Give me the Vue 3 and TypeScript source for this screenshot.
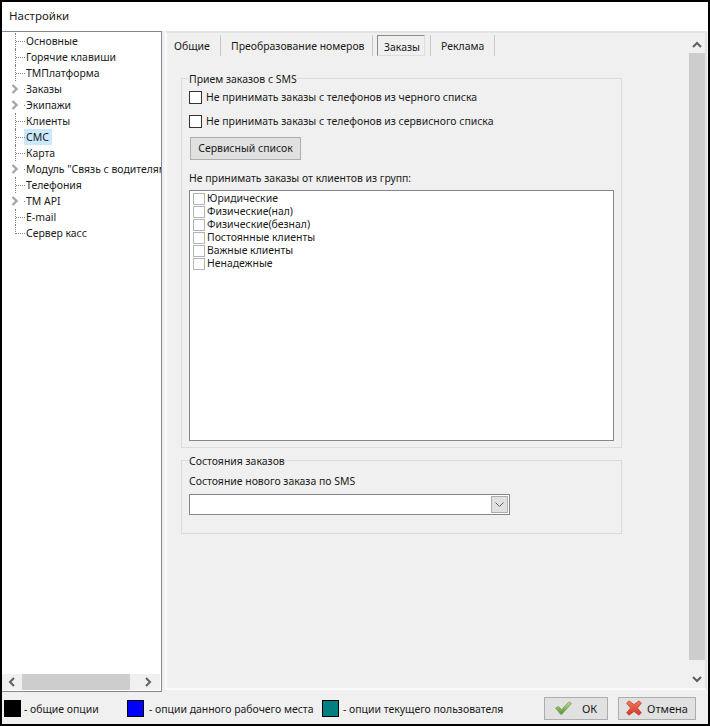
<script setup lang="ts">
const tree = [
  { t: 'Основные' }, { t: 'Горячие клавиши' }, { t: 'ТМПлатформа' },
  { t: 'Заказы', e: true }, { t: 'Экипажи', e: true }, { t: 'Клиенты' },
  { t: 'СМС', s: true }, { t: 'Карта' }, { t: 'Модуль "Связь с водителями"', e: true },
  { t: 'Телефония' }, { t: 'TM API', e: true }, { t: 'E-mail' }, { t: 'Сервер касс', last: true },
]
const tabs = ['Общие', 'Преобразование номеров', 'Заказы', 'Реклама']
const groups = ['Юридические', 'Физические(нал)', 'Физические(безнал)', 'Постоянные клиенты', 'Важные клиенты', 'Ненадежные']
const legend = [
  { c: '#000000', t: '- общие опции', w: 123 },
  { c: '#0000ff', t: '- опции данного рабочего места', w: 195 },
  { c: '#008080', t: '- опции текущего пользователя', w: 200 },
]
</script>

<template>
  <div class="window">
    <div class="title">Настройки</div>
    <div class="main">
      <aside class="tree">
        <div class="tree-list">
          <div v-for="n in tree" :key="n.t" class="node" :class="{ last: n.last }">
            <span class="guide" :class="{ exp: n.e }">
              <svg v-if="n.e" class="expander" width="8" height="10" viewBox="0 0 8 10"><path d="M1.5 1 L5.5 5 L1.5 9" fill="none" stroke="#a6a6a6" stroke-width="2.4" /></svg>
            </span>
            <span class="node-text" :class="{ sel: n.s }">{{ n.t }}</span>
          </div>
        </div>
        <div class="hscroll">
          <svg class="arr" width="16" height="16" viewBox="0 0 16 16"><path d="M10 4 L6 8 L10 12" fill="none" stroke="#606060" stroke-width="2" /></svg>
          <div class="hthumb"></div>
          <svg class="arr right" width="16" height="16" viewBox="0 0 16 16"><path d="M6 4 L10 8 L6 12" fill="none" stroke="#606060" stroke-width="2" /></svg>
        </div>
      </aside>
      <section class="pane">
        <div class="pane-body">
          <div class="tabs">
            <div v-for="(t, i) in tabs" :key="t" class="tab" :class="'tab' + i">
              <span :class="{ active: i === 2 }">{{ t }}</span>
            </div>
          </div>
          <fieldset class="group g1">
            <legend>Прием заказов с SMS</legend>
            <label class="chk c1"><i class="box"></i>Не принимать заказы с телефонов из черного списка</label>
            <label class="chk c2"><i class="box"></i>Не принимать заказы с телефонов из сервисного списка</label>
            <button class="btn svc">Сервисный список</button>
            <div class="cap">Не принимать заказы от клиентов из групп:</div>
            <div class="list">
              <div v-for="g in groups" :key="g" class="li"><i class="minibox"></i>{{ g }}</div>
            </div>
          </fieldset>
          <fieldset class="group g2">
            <legend>Состояния заказов</legend>
            <div class="cap2">Состояние нового заказа по SMS</div>
            <div class="combo">
              <div class="drop">
                <svg width="9" height="6" viewBox="0 0 9 6"><path d="M0.5 0.5 L4.5 4.5 L8.5 0.5" fill="none" stroke="#606060" stroke-width="1" /></svg>
              </div>
            </div>
          </fieldset>
        </div>
        <div class="vscroll">
          <svg width="16" height="17" viewBox="0 0 16 17"><path d="M4 11 L8 7 L12 11" fill="none" stroke="#606060" stroke-width="2" /></svg>
          <div class="vthumb"></div>
          <svg class="vdown" width="16" height="17" viewBox="0 0 16 17"><path d="M4 7 L8 11 L12 7" fill="none" stroke="#606060" stroke-width="2" /></svg>
        </div>
      </section>
    </div>
    <footer class="footer">
      <div v-for="l in legend" :key="l.t" class="leg" :style="{ width: l.w + 'px' }">
        <i class="swatch" :style="{ background: l.c }"></i><span>{{ l.t }}</span>
      </div>
      <div class="actions">
        <button class="btn ok">
          <svg width="17" height="14" viewBox="0 0 17 14">
            <defs><linearGradient id="gc" x1="0" y1="0" x2="0" y2="1"><stop offset="0" stop-color="#b5d98c" /><stop offset="1" stop-color="#5f9338" /></linearGradient></defs>
            <path d="M0.5 7 L3.5 5.5 L6.5 8.5 L14 0.8 L16.5 2.5 L7 13.2 L5.5 13.2 Z" fill="url(#gc)" stroke="#7ea75a" stroke-width="0.8" />
          </svg>
          <span>ОК</span>
        </button>
        <button class="btn cancel">
          <svg width="16" height="16" viewBox="0 0 16 16">
            <defs><linearGradient id="gx" x1="0" y1="0" x2="0" y2="1"><stop offset="0" stop-color="#ee7a62" /><stop offset="1" stop-color="#cf3a28" /></linearGradient></defs>
            <path d="M3 0.8 L8 4.6 L13 0.8 L15.4 3.2 L11.4 8 L15.4 12.8 L13 15.2 L8 11.4 L3 15.2 L0.6 12.8 L4.6 8 L0.6 3.2 Z" fill="url(#gx)" stroke="#c8442f" stroke-width="0.8" stroke-linejoin="round" />
          </svg>
          <span>Отмена</span>
        </button>
      </div>
    </footer>
  </div>
</template>

<style>
html, body { margin: 0; background: #000; }
</style>

<style scoped>
* { box-sizing: border-box; }
.window { width: 710px; height: 726px; border: 2px solid #000; background: #f0f0f0; display: flex; flex-direction: column; font: 10.45px/13px "Noto Sans", sans-serif; color: #1a1a1a; overflow: hidden; }
.title { height: 29px; flex: none; background: #fff; font-size: 11.5px; line-height: 28px; padding-left: 7px; color: #1c1c1c; }
.main { height: 661px; flex: none; display: flex; }
.tree { width: 160px; flex: none; background: #fff; border: 1px solid #828790; border-width: 1px 1px 1px 0; display: flex; flex-direction: column; }
.tree-list { flex: 1; padding: 1px 0 0 13px; overflow: hidden; }
.node { height: 16px; display: flex; white-space: nowrap; }
.guide { width: 10px; height: 16px; flex: none; position: relative; border-left: 1px dotted #808080; }
.guide::after { content: ""; position: absolute; left: 0; right: 0; top: 8px; border-top: 1px dotted #808080; }
.guide.exp { border-left-color: transparent; }
.guide.exp::after { left: 8px; }
.last .guide { height: 9px; }
.expander { position: absolute; left: -5px; top: 3px; }
.node-text { padding: 0 3px 0 2px; line-height: 16px; margin-left: -1px; }
.node-text.sel { background: #cce8ff; }
.hscroll { height: 16px; flex: none; background: #f0f0f0; display: flex; margin-right: 1px; margin-bottom: 1px; padding-left: 2px; }
.arr { flex: none; }
.arr.right { margin-left: auto; margin-right: 4px; }
.hthumb { width: 108px; margin-left: 2px; background: #cdcdcd; }
.pane { width: 542px; flex: none; margin-left: 3px; height: 659px; background: #f0f0f0; border: 2px solid #e3e3e3; border-left-color: #fbfbfb; border-bottom-color: #fbfbfb; display: flex; }
.pane-body { width: 522px; flex: none; padding: 2px 0 0 14px; }
.tabs { height: 22px; display: flex; margin-left: -9px; }
.tab { height: 21px; line-height: 23px; border-right: 1px solid #c8c8c8; white-space: nowrap; }
.tab0 { width: 49px; padding-left: 2px; }
.tab1 { width: 152px; padding-left: 10px; }
.tab2 { width: 58px; padding-left: 4px; line-height: 21px; }
.tab3 { width: 64px; padding-left: 10px; }
.tab .active { display: inline-block; vertical-align: top; width: 48px; height: 21px; border: 1px solid #8a8a8a; border-right-color: #ddd; border-bottom-color: #ddd; padding-left: 6px; line-height: 23px; }
.group { position: relative; display: block; width: 441px; margin: 0; padding: 0 0 0 7px; border: 1px solid #dcdcdc; min-width: 0; }
.group legend { padding: 0; margin-left: 0; line-height: 13px; position: relative; top: 1px; }
.g1 { margin-top: 15px; height: 376px; }
.g2 { margin-top: 6px; height: 80px; }
.chk { display: flex; align-items: center; height: 14px; white-space: nowrap; }
.box { width: 13px; height: 13px; flex: none; border: 1px solid #333; background: #fff; margin-right: 4px; }
.c1 { margin-top: 5px; }
.c2 { margin-top: 10px; }
.btn { font: inherit; color: inherit; background: #e1e1e1; border: 1px solid #adadad; padding: 0; }
.svc { display: block; margin: 9px 0 0 1px; width: 111px; height: 23px; }
.cap { margin-top: 12px; }
.list { width: 425px; height: 251px; margin-top: 5px; background: #fff; border: 1px solid #828790; padding: 1px 3px; }
.li { height: 13px; display: flex; align-items: center; white-space: nowrap; }
.minibox { width: 12px; height: 12px; flex: none; border: 1px solid #b4b4b4; background: #fff; margin-right: 2px; }
.cap2 { margin-top: 8px; }
.combo { width: 321px; height: 21px; margin-top: 6px; background: #fff; border: 1px solid #828790; padding: 1px; display: flex; justify-content: flex-end; }
.drop { width: 17px; height: 17px; background: #e1e1e1; border: 1px solid #adadad; display: flex; align-items: center; justify-content: center; }
.vscroll { width: 16px; flex: none; display: flex; flex-direction: column; background: #f0f0f0; margin-top: 3px; }
.vthumb { height: 607px; flex: none; background: #cdcdcd; }
.vdown { margin-top: 10px; }
.footer { flex: 1; display: flex; align-items: center; padding-left: 2px; }
.leg { display: flex; align-items: center; flex: none; }
.leg span { position: relative; top: 1px; }
.swatch { width: 17px; height: 17px; border: 1px solid #000; flex: none; margin-right: 4px; }
.leg:nth-child(1) .swatch { margin-right: 3px; }
.leg:nth-child(2) .swatch { margin-right: 5px; }
.actions { margin-left: auto; display: flex; gap: 10px; padding-right: 12px; }
.ok, .cancel { height: 23px; display: flex; align-items: center; justify-content: center; gap: 10px; font-size: 11px; }
.ok { width: 64px; }
.cancel { width: 78px; gap: 5px; }
</style>
